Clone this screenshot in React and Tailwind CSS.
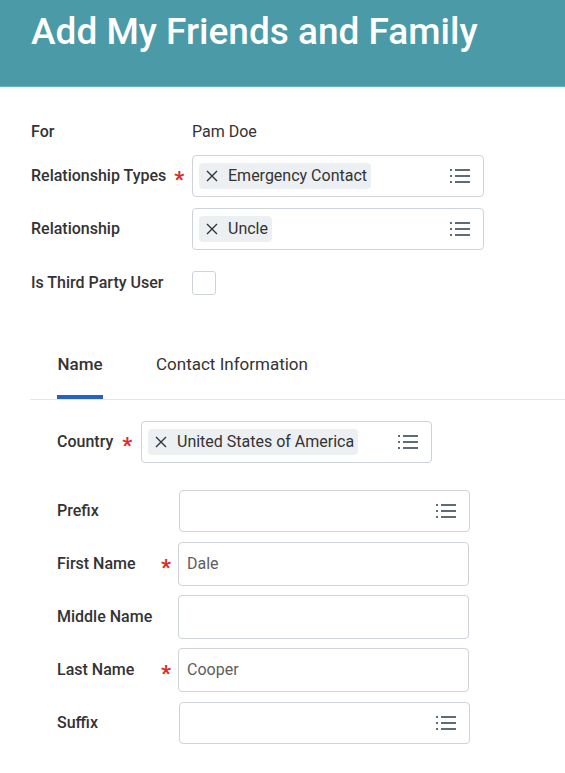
function ListIcon() {
  return (
    <svg width="20" height="14" viewBox="0 0 20 14" className="shrink-0">
      <rect x="0" y="0" width="2" height="2" fill="#5f6b77" />
      <rect x="0" y="6" width="2" height="2" fill="#5f6b77" />
      <rect x="0" y="12" width="2" height="2" fill="#5f6b77" />
      <rect x="5" y="0" width="15" height="2" fill="#5f6b77" />
      <rect x="5" y="6" width="15" height="2" fill="#5f6b77" />
      <rect x="5" y="12" width="15" height="2" fill="#5f6b77" />
    </svg>
  );
}

function XIcon() {
  return (
    <svg width="12" height="12" viewBox="0 0 12 12" className="shrink-0">
      <path d="M1 1L11 11M11 1L1 11" stroke="#333" strokeWidth="1.4" />
    </svg>
  );
}

function Star() {
  return <span className="text-[#de2b1f] text-[22px] leading-none font-bold translate-y-[4px]">*</span>;
}

function Chip({ label }) {
  return (
    <div className="flex items-center h-[26px] rounded-[4px] bg-[#edf0f2] pl-[7px] pr-[4px] gap-[10px]">
      <XIcon />
      <span className="text-[16px] text-[#333] whitespace-nowrap">{label}</span>
    </div>
  );
}

function SelectBox({ chip, width = 'w-[292px]' }) {
  return (
    <div className={`${width} h-[42px] border border-[#ced3d9] rounded-[4px] flex items-center justify-between pl-[6px] pr-[13px] bg-white`}>
      <div className="flex items-center">{chip && <Chip label={chip} />}</div>
      <ListIcon />
    </div>
  );
}

function TextBox({ value }) {
  return (
    <div className="w-[291px] h-[44px] border border-[#ced3d9] rounded-[4px] flex items-center px-[8px] bg-white">
      <span className="text-[16px] text-[#5e5e5e]">{value}</span>
    </div>
  );
}

function Label({ children, required, width }) {
  return (
    <div className={`${width} flex items-center justify-between pr-[7px]`}>
      <span className="text-[16px] font-medium text-[#333]">{children}</span>
      {required && <Star />}
    </div>
  );
}

export default function App() {
  return (
    <div className="w-[565px] h-[773px] bg-white overflow-hidden" style={{ fontFamily: 'Roboto, "Noto Sans", sans-serif' }}>
      <div className="h-[87px] bg-[#4a9aa8] border-b border-[#66b3c0] pl-[31px] pt-[8px]">
        <h1 className="text-[37px] font-medium text-white leading-[48px]">Add My Friends and Family</h1>
      </div>

      <div className="pl-[31px] pt-[33px]">
        <div className="flex items-center h-[24px]">
          <span className="w-[161px] text-[16px] font-medium text-[#333]">For</span>
          <span className="text-[16px] text-[#333]">Pam Doe</span>
        </div>
        <div className="flex items-center mt-[11px]">
          <div className="w-[161px] flex items-center gap-[8px]">
            <span className="text-[16px] font-medium text-[#333]">Relationship Types</span>
            <Star />
          </div>
          <SelectBox chip="Emergency Contact" />
        </div>
        <div className="flex items-center mt-[11px]">
          <span className="w-[161px] text-[16px] font-medium text-[#333]">Relationship</span>
          <SelectBox chip="Uncle" />
        </div>
        <div className="flex items-center mt-[21px]">
          <span className="w-[161px] text-[16px] font-medium text-[#333]">Is Third Party User</span>
          <div className="w-[24px] h-[24px] border border-[#ced3d9] rounded-[3px]" />
        </div>
      </div>

      <div className="ml-[30px] mt-[57px] border-b border-[#e3e6e9] flex pl-[27px] gap-[53px]">
        <div className="flex flex-col items-center">
          <span className="text-[17px] font-medium text-[#333] leading-[24px]">Name</span>
          <div className="w-[46px] h-[4px] bg-[#2762c2] mt-[19px]" />
        </div>
        <div className="flex flex-col">
          <span className="text-[17px] text-[#333] leading-[24px]">Contact Information</span>
        </div>
      </div>

      <div className="pl-[57px] pt-[21px]">
        <div className="flex items-center">
          <div className="w-[84px] flex items-center gap-[9px]">
            <span className="text-[16px] font-medium text-[#333]">Country</span>
            <Star />
          </div>
          <SelectBox chip="United States of America" width="w-[291px]" />
        </div>
        <div className="flex items-center mt-[27px]">
          <Label width="w-[122px]">Prefix</Label>
          <SelectBox width="w-[291px]" />
        </div>
        <div className="flex items-center mt-[10px]">
          <Label width="w-[121px]" required>First Name</Label>
          <TextBox value="Dale" />
        </div>
        <div className="flex items-center mt-[9px]">
          <Label width="w-[121px]">Middle Name</Label>
          <TextBox value="" />
        </div>
        <div className="flex items-center mt-[9px]">
          <Label width="w-[121px]" required>Last Name</Label>
          <TextBox value="Cooper" />
        </div>
        <div className="flex items-center mt-[10px]">
          <Label width="w-[122px]">Suffix</Label>
          <SelectBox width="w-[291px]" />
        </div>
      </div>
    </div>
  );
}
